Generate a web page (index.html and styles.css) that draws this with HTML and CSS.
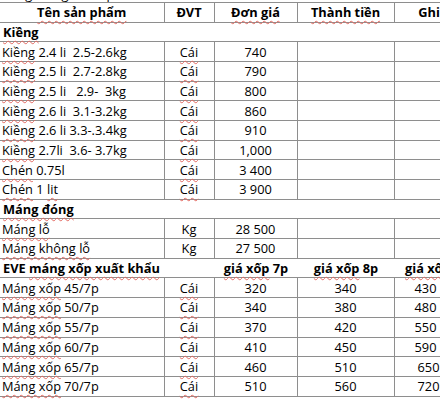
FILE: index.html
```html
<!DOCTYPE html>
<html lang="vi">
<head>
<meta charset="utf-8">
<title>Bảng giá</title>
<link rel="stylesheet" href="styles.css">
</head>
<body>
<div class="page">
  <div class="title"><span><span class="sp">Bảng báo giá</span> sản phẩm</span></div>
  <table class="sheet">
    <colgroup>
      <col class="c1"><col class="c2"><col class="c3"><col class="c4"><col class="c5">
    </colgroup>
    <thead>
      <tr class="head">
        <th class="first"><span class="sp">Tên sản phẩm</span></th>
        <th>ĐVT</th>
        <th><span class="sp">Đơn giá</span></th>
        <th><span class="sp">Thành tiền</span></th>
        <th class="note">Ghi chú</th>
      </tr>
    </thead>
    <tbody>
      <tr class="section"><td colspan="5"><span class="sp">Kiềng</span></td></tr>
      <tr><td class="name"><span class="sp">Kiềng</span> 2.4 li  2.5-2.6kg</td><td><span class="sp">Cái</span></td><td>740</td><td></td><td></td></tr>
      <tr><td class="name"><span class="sp">Kiềng</span> 2.5 li  2.7-2.8kg</td><td><span class="sp">Cái</span></td><td>790</td><td></td><td></td></tr>
      <tr><td class="name"><span class="sp">Kiềng</span> 2.5 li   2.9-  3kg</td><td><span class="sp">Cái</span></td><td>800</td><td></td><td></td></tr>
      <tr><td class="name"><span class="sp">Kiềng</span> 2.6 li  3.1-3.2kg</td><td><span class="sp">Cái</span></td><td>860</td><td></td><td></td></tr>
      <tr><td class="name"><span class="sp">Kiềng</span> 2.6 li 3.3-.3.4kg</td><td><span class="sp">Cái</span></td><td>910</td><td></td><td></td></tr>
      <tr><td class="name"><span class="sp">Kiềng</span> 2.7li  3.6- 3.7kg</td><td><span class="sp">Cái</span></td><td>1,000</td><td></td><td></td></tr>
      <tr><td class="name"><span class="sp">Chén</span> 0.75l</td><td><span class="sp">Cái</span></td><td>3 400</td><td></td><td></td></tr>
      <tr><td class="name"><span class="sp">Chén</span> 1 <span class="sp">lit</span></td><td><span class="sp">Cái</span></td><td>3 900</td><td></td><td></td></tr>
      <tr class="section"><td colspan="5"><span class="sp">Máng đóng</span></td></tr>
      <tr><td class="name"><span class="sp">Máng lỗ</span></td><td>Kg</td><td>28 500</td><td></td><td></td></tr>
      <tr><td class="name"><span class="sp">Máng không lỗ</span></td><td>Kg</td><td>27 500</td><td></td><td></td></tr>
      <tr class="section sub">
        <td colspan="2">EVE <span class="sp">máng xốp xuất khẩu</span></td>
        <td><span class="sp">giá xốp</span> 7p</td>
        <td><span class="sp">giá xốp</span> 8p</td>
        <td class="last"><span class="sp">giá xốp</span> 9p</td>
      </tr>
      <tr class="eve"><td class="name"><span class="sp">Máng xốp</span> 45/7p</td><td><span class="sp">Cái</span></td><td>320</td><td>340</td><td class="last">430</td></tr>
      <tr class="eve"><td class="name"><span class="sp">Máng xốp</span> 50/7p</td><td><span class="sp">Cái</span></td><td>340</td><td>380</td><td class="last">480</td></tr>
      <tr class="eve"><td class="name"><span class="sp">Máng xốp</span> 55/7p</td><td><span class="sp">Cái</span></td><td>370</td><td>420</td><td class="last">550</td></tr>
      <tr class="eve"><td class="name"><span class="sp">Máng xốp</span> 60/7p</td><td><span class="sp">Cái</span></td><td>410</td><td>450</td><td class="last">590</td></tr>
      <tr class="eve"><td class="name"><span class="sp">Máng xốp</span> 65/7p</td><td><span class="sp">Cái</span></td><td>460</td><td>510</td><td class="last shift">650</td></tr>
      <tr class="eve"><td class="name"><span class="sp">Máng xốp</span> 70/7p</td><td><span class="sp">Cái</span></td><td>510</td><td>560</td><td class="last shift">720</td></tr>
    </tbody>
  </table>
</div>
</body>
</html>
```

FILE: styles.css
```css
html, body {
  margin: 0;
  padding: 0;
  background: #ffffff;
}

.page {
  width: 440px;
  height: 400px;
  overflow: hidden;
  font-family: "Open Sans", "Noto Sans", sans-serif;
  font-size: 12.8px;
  color: #000000;
}

.title {
  height: 2px;
  overflow: hidden;
  display: flex;
  align-items: flex-end;
  padding-left: 2px;
  line-height: 16px;
  white-space: nowrap;
}

.sheet {
  border-collapse: collapse;
  table-layout: fixed;
  width: 491px;
}

.c1 { width: 164px; }
.c2 { width: 50px; }
.c3 { width: 83px; }
.c4 { width: 97px; }
.c5 { width: 97px; }

.sheet th,
.sheet td {
  height: 19.7px;
  padding: 1px 2px 0;
  box-sizing: border-box;
  border: 1px solid #8e8e8e;
  text-align: center;
  vertical-align: middle;
  white-space: pre;
  line-height: 17px;
  overflow: visible;
}

.sheet tr > :first-child {
  border-left: none;
}

.sheet th {
  font-weight: bold;
}

.head th {
  height: 19.5px;
  padding-top: 0;
}

.sheet td.name {
  text-align: left;
  padding-left: 2px;
}

.section td {
  font-weight: bold;
  text-align: left;
  padding-left: 3px;
  border-left: none;
  border-right: none;
}

.section.sub td {
  text-align: center;
}

.section.sub td:first-child {
  text-align: left;
}

.section.sub td.last {
  text-align: left;
  padding-left: 11px;
}

.eve td.last {
  text-align: left;
  padding-left: 20px;
}

.eve td.shift {
  padding-left: 23px;
}

.sp {
  text-decoration-line: underline;
  text-decoration-style: wavy;
  text-decoration-color: #e36a62;
  text-decoration-thickness: 1px;
  text-underline-offset: 3px;
  text-decoration-skip-ink: none;
}
```
